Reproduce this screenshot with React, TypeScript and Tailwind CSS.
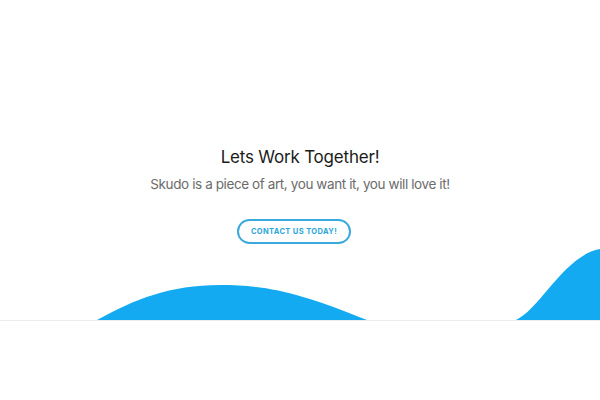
export default function App() {
  return (
    <div className="min-h-screen bg-white" style={{ fontFamily: "Inter, 'Open Sans', sans-serif" }}>
      <section className="flex flex-col items-center pt-[145px]">
        <h2 className="text-[17px] leading-[24px] font-normal tracking-[-0.2px] text-[#1b1b1b]">Lets Work Together!</h2>
        <p className="mt-[4px] text-[13.5px] leading-[22px] tracking-[-0.4px] text-[#6b6b6b]">
          Skudo is a piece of art, you want it, you will love it!
        </p>
        <button className="mt-[24px] mr-[12px] h-[25px] px-[12px] rounded-full border-2 border-[#3aa9dc] text-[7.5px] font-bold tracking-[0.05em] text-[#2aa6dc]">
          CONTACT US TODAY!
        </button>
      </section>
      <svg className="mt-[3px] block" width="600" height="73" viewBox="0 0 600 73">
        <path d="M97,73 C135,52 170,38 220,38 C268,38 300,46 367,73 Z" fill="#13aaf2" />
        <path d="M516,73 C540,62 565,8 600,2 L600,73 Z" fill="#13aaf2" />
      </svg>
      <div className="h-px bg-[#ececec]" />
    </div>
  );
}
